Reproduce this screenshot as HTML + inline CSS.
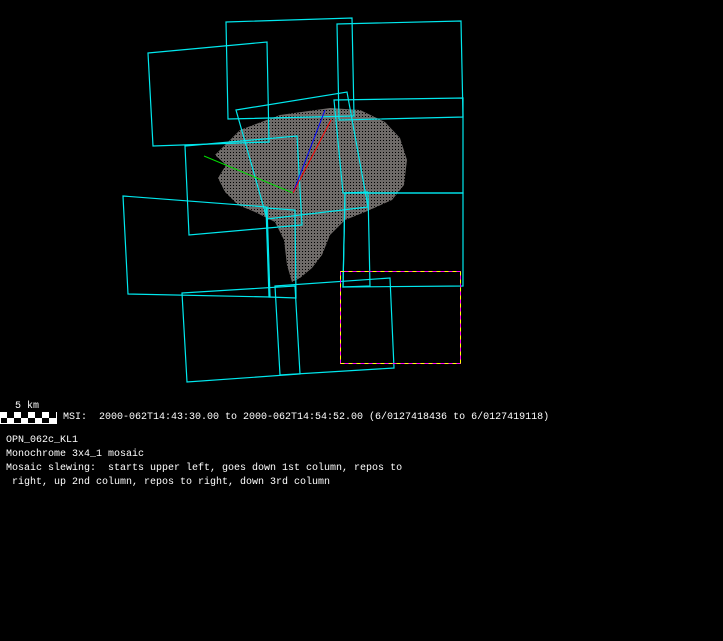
<!DOCTYPE html>
<html><head><style>
body{margin:0;background:#000;width:723px;height:641px;overflow:hidden;position:relative;font-family:"Liberation Mono",monospace;font-size:10px;color:#fff}
.t{position:absolute;white-space:pre;line-height:12px}
svg{position:absolute;left:0;top:0}
</style></head><body>
<svg width="723" height="641">
<defs><pattern id="p" width="3" height="3" patternUnits="userSpaceOnUse"><rect width="3" height="3" fill="#6e6a68"/><rect x="2" y="2" width="1" height="1" fill="#000"/></pattern></defs>
<path d="M240,130 L280,115 L330,108 L360,110 L385,122 L400,138 L407,160 L404,185 L392,200 L365,212 L345,220 L330,235 L322,255 L312,268 L300,278 L292,282 L287,265 L284,240 L275,222 L255,212 L238,205 L225,192 L218,178 L226,165 L215,155 L225,145 Z" fill="url(#p)"/>
<g fill="none" stroke="#00e8ee" stroke-width="1.2">
<polygon points="148,53 267,42 269,142 153,146"/>
<polygon points="226,22 352,18 354,116 228,119"/>
<polygon points="337,24 461,21 463,117 339,120"/>
<polygon points="236,110 347,92 368,207 267,219"/>
<polygon points="334,100 463,98 463,193 343,193"/>
<polygon points="185,146 297,136 302,225 189,235"/>
<polygon points="123,196 267,207 270,297 128,294"/>
<polygon points="266,208 295,210 296,298 269,297"/>
<polygon points="345,193 368,192 370,286 343,287"/>
<polygon points="345,193 463,193 463,286 343,287"/>
<polygon points="182,293 295,286 300,374 187,382"/>
<polygon points="275,286 390,278 394,368 280,375"/>
</g>
<rect x="340.5" y="271.5" width="120" height="92" fill="none" stroke="#ff00ff" stroke-width="1"/>
<rect x="340.5" y="271.5" width="120" height="92" fill="none" stroke="#ffff00" stroke-width="1" stroke-dasharray="4,4"/>
<line x1="204" y1="156" x2="293" y2="193" stroke="#00dd00"/>
<line x1="293" y1="193" x2="325" y2="110" stroke="#0000ff"/>
<line x1="293" y1="193" x2="331" y2="120" stroke="#ff0000"/>
<g fill="#fff">
<rect x="0" y="412" width="57" height="12"/>
</g>
<g fill="#000">
<rect x="7" y="412" width="7" height="6"/><rect x="21" y="412" width="7" height="6"/><rect x="35" y="412" width="7" height="6"/><rect x="49" y="412" width="7" height="6"/>
<rect x="1" y="418" width="6" height="5"/><rect x="14" y="418" width="7" height="5"/><rect x="28" y="418" width="7" height="5"/><rect x="42" y="418" width="7" height="5"/>
</g>
</svg>
<div class="t" style="left:15px;top:401px">5 km</div>
<div class="t" style="left:63px;top:412px">MSI:  2000-062T14:43:30.00 to 2000-062T14:54:52.00 (6/0127418436 to 6/0127419118)</div>
<div class="t" style="left:6px;top:435px">OPN_062c_KL1</div>
<div class="t" style="left:6px;top:449px">Monochrome 3x4_1 mosaic</div>
<div class="t" style="left:6px;top:463px">Mosaic slewing:  starts upper left, goes down 1st column, repos to</div>
<div class="t" style="left:6px;top:477px"> right, up 2nd column, repos to right, down 3rd column</div>
</body></html>
